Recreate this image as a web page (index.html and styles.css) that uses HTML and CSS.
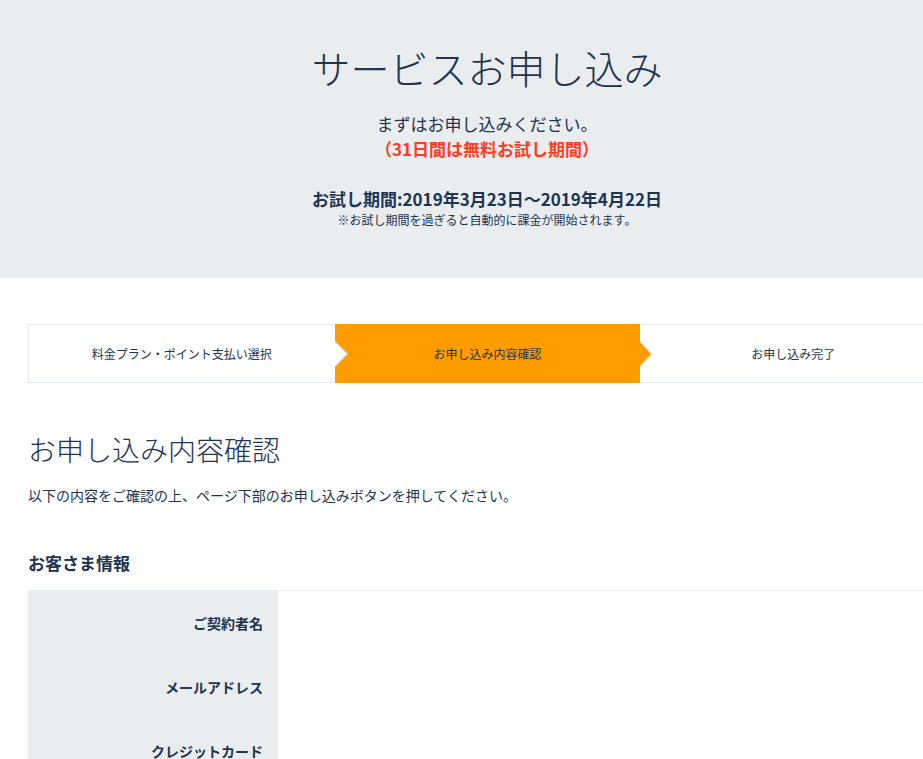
FILE: index.html
```html
<!DOCTYPE html>
<html lang="ja">
<head>
<meta charset="utf-8">
<title>サービスお申し込み</title>
<link rel="stylesheet" href="styles.css">
</head>
<body>
<div class="page">
  <header class="hero">
    <h1 class="hero-title">サービスお申し込み</h1>
    <p class="hero-lead">まずはお申し込みください。<br><span class="hero-free">（31日間は無料お試し期間）</span></p>
    <p class="hero-period">お試し期間:2019年3月23日～2019年4月22日</p>
    <p class="hero-note">※お試し期間を過ぎると自動的に課金が開始されます。</p>
  </header>

  <main class="main">
    <ol class="steps">
      <li class="step step-done">料金プラン・ポイント支払い選択</li>
      <li class="step step-active">お申し込み内容確認</li>
      <li class="step">お申し込み完了</li>
    </ol>

    <h2 class="section-title">お申し込み内容確認</h2>
    <p class="section-lead">以下の内容をご確認の上、ページ下部のお申し込みボタンを押してください。</p>

    <h3 class="group-title">お客さま情報</h3>
    <div class="info">
      <div class="info-row">
        <div class="info-label">ご契約者名</div>
        <div class="info-value"></div>
      </div>
      <div class="info-row">
        <div class="info-label">メールアドレス</div>
        <div class="info-value"></div>
      </div>
      <div class="info-row">
        <div class="info-label">クレジットカード</div>
        <div class="info-value"></div>
      </div>
    </div>
  </main>
</div>
</body>
</html>
```

FILE: styles.css
```css
html, body {
  margin: 0;
  padding: 0;
  overflow-x: hidden;
}

body {
  font-family: "Noto Sans CJK JP", "Noto Sans", sans-serif;
  color: #1d3452;
  background: #ffffff;
}

.page {
  width: 974px;
}

.hero {
  background: #e9edf0;
  text-align: center;
  padding: 38px 0 50px;
}

.hero-title {
  margin: 0;
  font-size: 39px;
  font-weight: 300;
  line-height: 58px;
}

.hero-lead {
  margin: 15px 0 0;
  font-size: 17px;
  line-height: 25px;
}

.hero-free {
  color: #ff3c1e;
  font-weight: 700;
}

.hero-period {
  margin: 25px 0 0;
  font-size: 17px;
  font-weight: 700;
  line-height: 25px;
}

.hero-note {
  margin: 0;
  font-size: 12px;
  line-height: 17px;
}

.main {
  padding: 46px 28px 0;
}

.steps {
  list-style: none;
  margin: 0;
  padding: 0;
  display: flex;
}

.step {
  position: relative;
  flex: 1;
  height: 57px;
  display: flex;
  align-items: center;
  justify-content: center;
  font-size: 12px;
  border-top: 1px solid #e6e9ec;
  border-bottom: 1px solid #e6e9ec;
  background: #ffffff;
}

.step:first-child {
  border-left: 1px solid #e6e9ec;
}

.step-active {
  background: #ff9d00;
  border-color: #ff9d00;
}

.step-done::before,
.step-active::before {
  content: "";
  position: absolute;
  top: 50%;
  right: -13px;
  margin-top: -13px;
  border-style: solid;
  border-width: 13px 0 13px 13px;
  border-color: transparent transparent transparent #e3e6e9;
  z-index: 1;
}

.step-done::after,
.step-active::after {
  content: "";
  position: absolute;
  top: 50%;
  right: -11px;
  margin-top: -12px;
  border-style: solid;
  border-width: 12px 0 12px 11px;
  border-color: transparent transparent transparent #ffffff;
  z-index: 2;
}

.step-active::after {
  border-left-color: #ff9d00;
}

.section-title {
  margin: 47px 0 0;
  font-size: 28px;
  font-weight: 300;
  line-height: 39px;
}

.section-lead {
  margin: 14px 0 0;
  font-size: 14px;
  line-height: 24px;
}

.group-title {
  margin: 44px 0 0;
  font-size: 17px;
  font-weight: 700;
  line-height: 24px;
}

.info {
  margin-top: 15px;
  border-top: 1px solid #eceef0;
}

.info-row {
  display: flex;
}

.info-label {
  width: 250px;
  box-sizing: border-box;
  padding: 20px 15px 20px 0;
  background: #e9edf0;
  text-align: right;
  font-size: 14px;
  font-weight: 700;
  line-height: 24px;
}

.info-row:first-child .info-label {
  margin-top: -1px;
  padding-top: 21px;
}

.info-value {
  flex: 1;
}
```
